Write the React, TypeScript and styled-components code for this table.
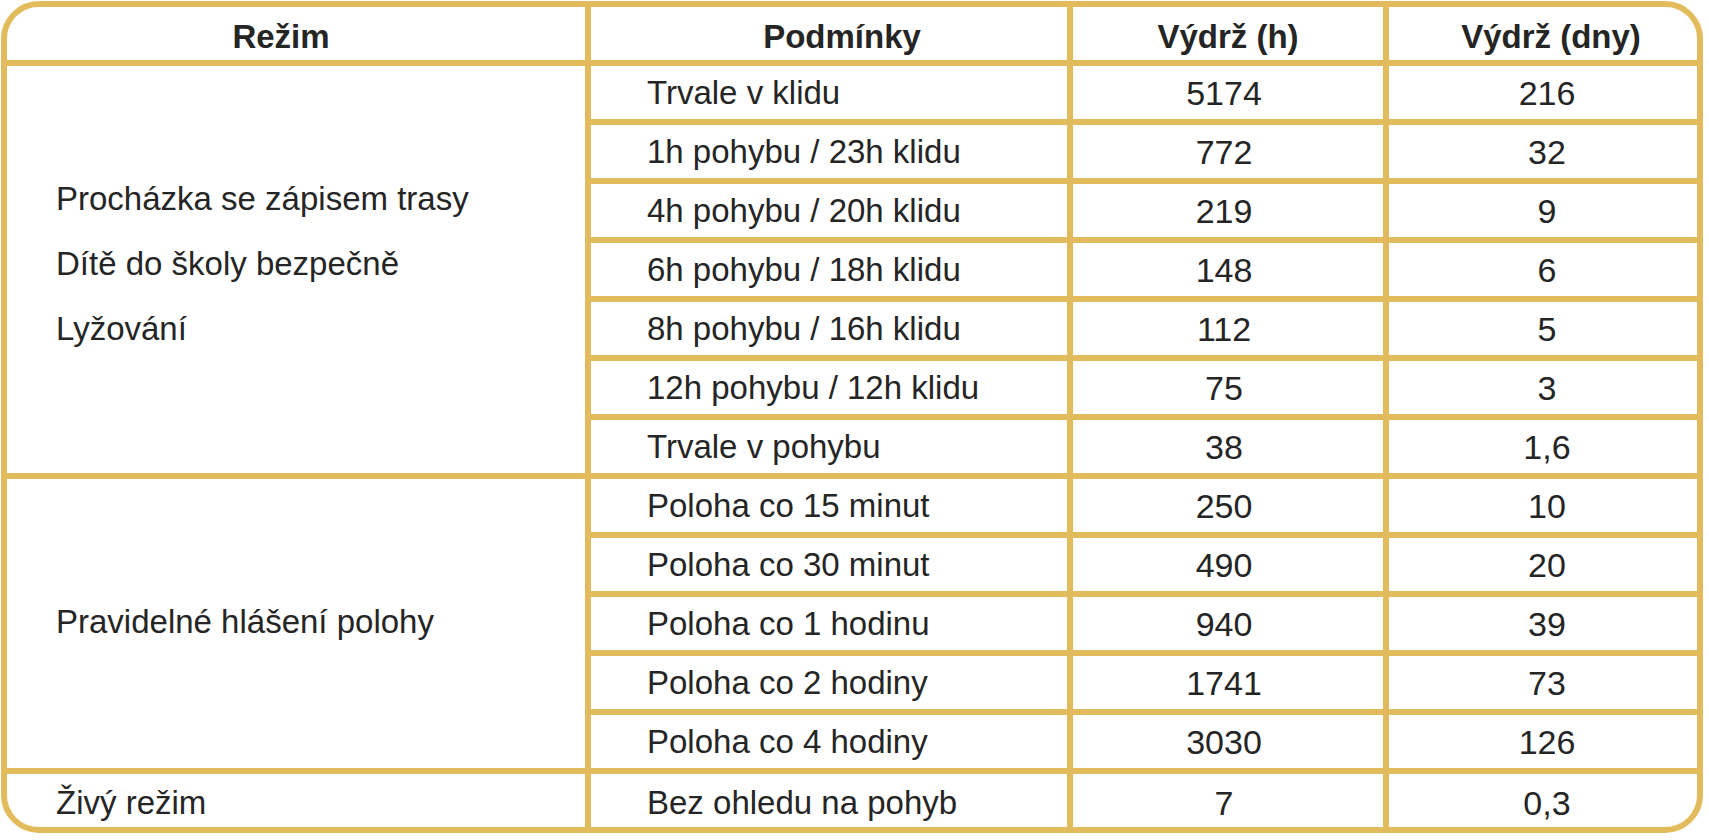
import React from "react";
import styled, { createGlobalStyle } from "styled-components";

const GOLD = "#e2bb5c";

const Global = createGlobalStyle`
  html, body { margin: 0; padding: 0; background: #ffffff; }
  body { font-family: "Liberation Sans", Arial, Helvetica, sans-serif; }
`;

const Frame = styled.div`
  margin: 1px 0 0 1px;
  width: 1702px;
  box-sizing: border-box;
  border: 6px solid ${GOLD};
  border-radius: 38px;
  overflow: hidden;
  background: ${GOLD};
`;

const Grid = styled.div`
  display: grid;
  grid-template-columns: 578px 476px 310px 308px;
  grid-template-rows: repeat(14, 53px);
  gap: 6px;
  background: ${GOLD};
`;

type CellProps = {
  $span?: number;
  $align?: "left" | "center";
  $pad?: number;
  $shift?: number;
  $down?: number;
  $dx?: number;
  $lh?: number;
};

const Cell = styled.div<CellProps>`
  background: #ffffff;
  display: flex;
  flex-direction: column;
  justify-content: center;
  align-items: ${(p) => (p.$align === "center" ? "center" : "flex-start")};
  padding-left: ${(p) => (p.$pad ?? 0) + Math.max(0, (p.$dx ?? 0) * 2)}px;
  padding-right: ${(p) => Math.max(0, -(p.$dx ?? 0) * 2)}px;
  padding-bottom: ${(p) => p.$shift ?? 0}px;
  padding-top: ${(p) => p.$down ?? 0}px;
  box-sizing: border-box;
  grid-row: ${(p) => (p.$span ? `span ${p.$span}` : "auto")};
  color: #252525;
  font-family: "Liberation Sans", Arial, Helvetica, sans-serif;
  font-size: 33px;
  line-height: ${(p) => p.$lh ?? 56}px;
  white-space: nowrap;
`;

const HeadCell = styled(Cell)`
  font-weight: bold;
  padding-top: 6px;
`;

const CondCell = styled(Cell)`
  grid-column: 2;
  padding-left: 56px;
`;

const NumCell = styled(Cell)`
  font-size: 34px;
`;

type Row = [string, string, string];

const groups: {
  modes: string[];
  pad: number;
  shift: number;
  lh: number;
  down: number;
  rows: Row[];
}[] = [
  {
    modes: ["Procházka se zápisem trasy", "Dítě do školy bezpečně", "Lyžování"],
    pad: 49,
    shift: 12,
    lh: 65,
    down: 0,
    rows: [
      ["Trvale v klidu", "5174", "216"],
      ["1h pohybu / 23h klidu", "772", "32"],
      ["4h pohybu / 20h klidu", "219", "9"],
      ["6h pohybu / 18h klidu", "148", "6"],
      ["8h pohybu / 16h klidu", "112", "5"],
      ["12h pohybu / 12h klidu", "75", "3"],
      ["Trvale v pohybu", "38", "1,6"],
    ],
  },
  {
    modes: ["Pravidelné hlášení polohy"],
    pad: 49,
    shift: 4,
    lh: 56,
    down: 0,
    rows: [
      ["Poloha co 15 minut", "250", "10"],
      ["Poloha co 30 minut", "490", "20"],
      ["Poloha co 1 hodinu", "940", "39"],
      ["Poloha co 2 hodiny", "1741", "73"],
      ["Poloha co 4 hodiny", "3030", "126"],
    ],
  },
  {
    modes: ["Živý režim"],
    pad: 49,
    shift: 0,
    lh: 56,
    down: 5,
    rows: [["Bez ohledu na pohyb", "7", "0,3"]],
  },
];

export default function App() {
  return (
    <>
      <Global />
      <Frame>
        <Grid>
          <HeadCell $align="center" $dx={-15}>Režim</HeadCell>
          <HeadCell $align="center" $dx={13}>Podmínky</HeadCell>
          <HeadCell $align="center">Výdrž (h)</HeadCell>
          <HeadCell $align="center" $dx={8}>Výdrž (dny)</HeadCell>
          {groups.map((g, gi) => (
            <React.Fragment key={gi}>
              <Cell
                $span={g.rows.length}
                $pad={g.pad}
                $shift={g.shift}
                $lh={g.lh}
                $down={g.down}
              >
                {g.modes.map((m) => (
                  <span key={m}>{m}</span>
                ))}
              </Cell>
              {g.rows.map((r, ri) => (
                <React.Fragment key={ri}>
                  <CondCell $down={g.down}>{r[0]}</CondCell>
                  <NumCell $align="center" $dx={-4} $down={g.down}>
                    {r[1]}
                  </NumCell>
                  <NumCell $align="center" $dx={4} $down={g.down}>
                    {r[2]}
                  </NumCell>
                </React.Fragment>
              ))}
            </React.Fragment>
          ))}
        </Grid>
      </Frame>
    </>
  );
}
